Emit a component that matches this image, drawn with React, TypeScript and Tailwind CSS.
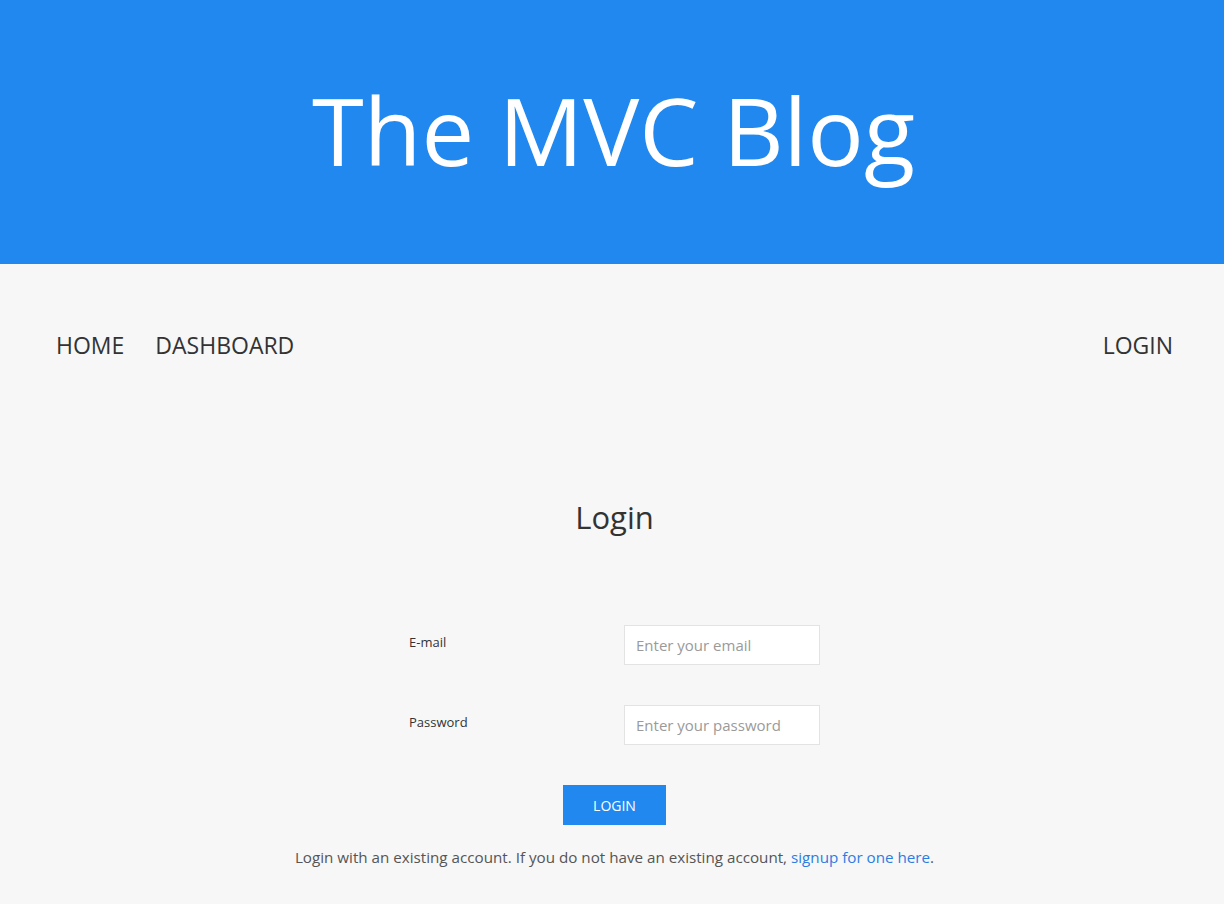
export default function App() {
  return (
    <div
      className="min-h-[904px] bg-[#f7f7f7] text-[#333]"
      style={{ fontFamily: '"Open Sans", "Noto Sans", sans-serif' }}
    >
      <header className="h-[264px] bg-[#2088ef] flex items-center justify-center">
        <h1 className="text-[94px] leading-none text-white font-normal -mt-[4px] ml-[3px]">The MVC Blog</h1>
      </header>

      <nav className="h-[162px] pl-[56px] pr-[51px] flex items-center justify-between text-[23px]">
        <div className="flex items-center gap-[31px]">
          <a href="#">HOME</a>
          <a href="#">DASHBOARD</a>
        </div>
        <a href="#">LOGIN</a>
      </nav>

      <main className="flex flex-col items-center ml-[5px]">
        <h2 className="text-[31px] leading-none mt-[76px]">Login</h2>

        <form className="mt-[92px] w-[411px] flex flex-col gap-[40px]">
          <div className="flex items-center justify-between">
            <label className="text-[13px] -mt-[4px]">E-mail</label>
            <input
              type="email"
              placeholder="Enter your email"
              className="w-[196px] h-[40px] bg-white border border-[#e3e3e3] px-[11px] text-[15px] placeholder:text-[#9a9a9a] outline-none"
            />
          </div>
          <div className="flex items-center justify-between">
            <label className="text-[13px] -mt-[4px]">Password</label>
            <input
              type="password"
              placeholder="Enter your password"
              className="w-[196px] h-[40px] bg-white border border-[#e3e3e3] px-[11px] text-[15px] placeholder:text-[#9a9a9a] outline-none"
            />
          </div>
        </form>

        <button className="mt-[40px] w-[103px] h-[40px] bg-[#2088ef] text-white text-[14px]">LOGIN</button>

        <p className="mt-[21px] text-[15.2px] text-[#555]">
          Login with an existing account. If you do not have an existing account,{" "}
          <a href="#" className="text-[#2b7de3]">signup for one here</a>.
        </p>
      </main>
    </div>
  );
}
